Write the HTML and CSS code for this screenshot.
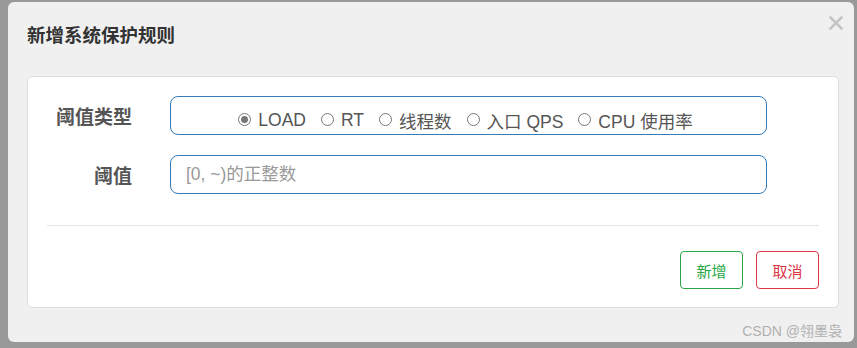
FILE: index.html
```html
<!DOCTYPE html>
<html lang="zh-CN">
<head>
    <meta charset="UTF-8">
    <title>新增系统保护规则</title>
    <link rel="stylesheet" href="styles.css">
</head>
<body>

    <div class="modal">
        <div class="modal-header">
            <h3 class="modal-title">新增系统保护规则</h3>
            <span class="close">
                <svg width="14" height="14" viewBox="0 0 14 14">
                    <path d="M1.5 1.5 L12.5 12.5 M12.5 1.5 L1.5 12.5" stroke="#c4c4c4" stroke-width="2.6" stroke-linecap="square"/>
                </svg>
            </span>
        </div>

        <div class="panel">
            <div class="form-row">
                <label class="form-label">阈值类型</label>
                <div class="form-box radio-group">
                    <span class="radio checked"></span><span class="radio-text">LOAD</span>
                    <span class="radio"></span><span class="radio-text">RT</span>
                    <span class="radio"></span><span class="radio-text">线程数</span>
                    <span class="radio"></span><span class="radio-text">入口 QPS</span>
                    <span class="radio"></span><span class="radio-text">CPU 使用率</span>
                </div>
            </div>
            <div class="form-row">
                <label class="form-label">阈值</label>
                <input class="form-box form-input" type="text" placeholder="[0, ~)的正整数">
            </div>

            <div class="divider"></div>

            <div class="actions">
                <button class="btn btn-add">新增</button>
                <button class="btn btn-cancel">取消</button>
            </div>
        </div>
    </div>

    <div class="watermark">CSDN @翎墨袅</div>

</body>
</html>
```

FILE: styles.css
```css
body {
    margin: 0;
    height: 348px;
    background-color: #999;
    font-family: "Liberation Sans", "Noto Sans CJK SC", sans-serif;
    padding: 2px 3px 0 8px;
    box-sizing: border-box;
    overflow: hidden;
}
.modal {
    position: relative;
    height: 340px;
    background: #f0f0f0;
    border-radius: 6px;
}
.modal-header {
    padding: 20px 19px 26px;
}
.modal-title {
    margin: 0;
    font-size: 18.5px;
    line-height: 28px;
    font-weight: bold;
    color: #333;
}
.close {
    position: absolute;
    top: 14px;
    right: 11px;
    width: 14px;
    height: 14px;
    cursor: pointer;
}
.close svg {
    display: block;
}
.panel {
    margin: 0 15px 0 19px;
    height: 232px;
    box-sizing: border-box;
    background: white;
    border: 1px solid #ddd;
    border-radius: 5px;
    padding: 19px 19px 0;
}
.form-row {
    display: flex;
    align-items: center;
    margin-bottom: 20px;
}
.form-label {
    width: 85px;
    text-align: right;
    margin-right: 38px;
    font-size: 19px;
    font-weight: bold;
    color: #555;
}
.form-box {
    width: 597px;
    height: 39px;
    box-sizing: border-box;
    border: 1px solid #337ab7;
    border-radius: 8px;
}
.radio-group {
    display: flex;
    align-items: center;
    justify-content: center;
    padding: 9px 6px 0 0;
    font-size: 17.5px;
    color: #555;
}
.radio {
    width: 13px;
    height: 13px;
    box-sizing: border-box;
    border: 1px solid #777;
    border-radius: 50%;
    margin-right: 7px;
    margin-top: -2px;
    display: flex;
    align-items: center;
    justify-content: center;
}
.radio.checked::after {
    content: "";
    width: 7px;
    height: 7px;
    border-radius: 50%;
    background: #777;
}
.radio-text {
    margin-right: 15px;
}
.radio-text:last-child {
    margin-right: 0;
}
.form-input {
    padding: 0 15px;
    font-family: inherit;
    font-size: 17.5px;
    color: #555;
    outline: none;
}
.form-input::placeholder {
    color: #999;
}
.divider {
    height: 1px;
    background: #e5e5e5;
    margin-top: 31px;
}
.actions {
    display: flex;
    justify-content: flex-end;
    gap: 13px;
    margin-top: 25px;
}
.btn {
    width: 63px;
    height: 38px;
    background: white;
    border-radius: 4px;
    font-family: inherit;
    font-size: 15px;
    cursor: pointer;
}
.btn-add {
    border: 1px solid #28a745;
    color: #28a745;
}
.btn-cancel {
    border: 1px solid #dc3545;
    color: #dc3545;
}
.watermark {
    position: absolute;
    right: 15px;
    top: 320px;
    font-size: 14px;
    color: #b0b0b0;
}
```
